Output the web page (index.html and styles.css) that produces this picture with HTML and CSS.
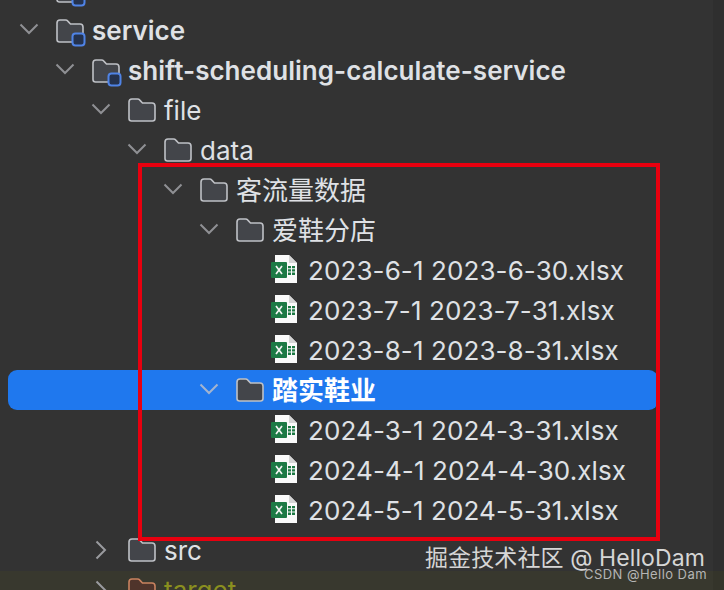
FILE: index.html
```html
<!DOCTYPE html>
<html lang="zh-CN">
<head>
<meta charset="utf-8">
<title>Project tree</title>
<link rel="stylesheet" href="styles.css">
</head>
<body>
<svg class="defs" width="0" height="0" aria-hidden="true">
  <symbol id="down" viewBox="0 0 20 12"><path d="M1.500 1.500 10 10l8.500-8.500" fill="none" stroke="currentColor" stroke-width="2"/></symbol>
  <symbol id="right" viewBox="0 0 12 20"><path d="M1.500 1.500 10 10l-8.500 8.500" fill="none" stroke="currentColor" stroke-width="2"/></symbol>
  <symbol id="folder" viewBox="0 0 28 24"><path d="M1 4a3 3 0 0 1 3-3h5.500c1 0 1.700.4 2.300 1.100L14.500 5H24a3 3 0 0 1 3 3v12.500a2.500 2.500 0 0 1-2.500 2.500h-21A2.500 2.500 0 0 1 1 20.500z" fill="#43454a" stroke="#bfc1c6" stroke-width="1.600"/></symbol>
  <symbol id="folder-target" viewBox="0 0 28 24"><path d="M1 4a3 3 0 0 1 3-3h5.500c1 0 1.700.4 2.300 1.100L14.500 5H24a3 3 0 0 1 3 3v12.500a2.500 2.500 0 0 1-2.500 2.500h-21A2.500 2.500 0 0 1 1 20.500z" fill="#4f342b" stroke="#c9825f" stroke-width="1.600"/></symbol>
  <symbol id="module" viewBox="0 0 30 28"><path d="M1 4a3 3 0 0 1 3-3h5.500c1 0 1.700.4 2.300 1.100L14.500 5H24a3 3 0 0 1 3 3v12.500a2.500 2.500 0 0 1-2.500 2.500h-21A2.500 2.500 0 0 1 1 20.500z" fill="#43454a" stroke="#bfc1c6" stroke-width="1.600"/><rect x="16.500" y="14.500" width="12" height="12" rx="3" fill="#25324d" stroke="#4f83e6" stroke-width="2"/></symbol>
  <symbol id="excel" viewBox="0 0 28 32"><path d="M4 0h14l8 8v20H4z" fill="#fafafa"/><path d="M18 0v8h8z" fill="#d5d5d5"/><rect x="0" y="7" width="16" height="16" rx="1" fill="#1d7a45"/><path d="M5 11l6 8M11 11l-6 8" stroke="#f4f4f4" stroke-width="1.700"/><path d="M17 11h3v2.300h-3zM21 11h3v2.300h-3zM17 14.300h3v2.300h-3zM21 14.300h3v2.300h-3zM17 17.600h3v2.300h-3zM21 17.600h3v2.300h-3z" fill="#1d7a45"/></symbol>
</svg>

<main class="tree">
  <div class="row d0 strong clipped"><svg class="chev"><use href="#down"/></svg><svg class="mod"><use href="#module"/></svg><span class="label">api-gateway</span></div>
  <div class="row d0 strong"><svg class="chev"><use href="#down"/></svg><svg class="mod"><use href="#module"/></svg><span class="label">service</span></div>
  <div class="row d1 strong"><svg class="chev"><use href="#down"/></svg><svg class="mod"><use href="#module"/></svg><span class="label">shift-scheduling-calculate-service</span></div>
  <div class="row d2"><svg class="chev"><use href="#down"/></svg><svg class="fold"><use href="#folder"/></svg><span class="label">file</span></div>
  <div class="row d3"><svg class="chev"><use href="#down"/></svg><svg class="fold"><use href="#folder"/></svg><span class="label">data</span></div>
  <div class="row d4"><svg class="chev"><use href="#down"/></svg><svg class="fold"><use href="#folder"/></svg><span class="label">客流量数据</span></div>
  <div class="row d5"><svg class="chev"><use href="#down"/></svg><svg class="fold"><use href="#folder"/></svg><span class="label">爱鞋分店</span></div>
  <div class="row file"><svg class="xls"><use href="#excel"/></svg><span class="label">2023-6-1 2023-6-30.xlsx</span></div>
  <div class="row file"><svg class="xls"><use href="#excel"/></svg><span class="label">2023-7-1 2023-7-31.xlsx</span></div>
  <div class="row file"><svg class="xls"><use href="#excel"/></svg><span class="label">2023-8-1 2023-8-31.xlsx</span></div>
  <div class="row d5 selected"><svg class="chev"><use href="#down"/></svg><svg class="fold"><use href="#folder"/></svg><span class="label">踏实鞋业</span></div>
  <div class="row file"><svg class="xls"><use href="#excel"/></svg><span class="label">2024-3-1 2024-3-31.xlsx</span></div>
  <div class="row file"><svg class="xls"><use href="#excel"/></svg><span class="label">2024-4-1 2024-4-30.xlsx</span></div>
  <div class="row file"><svg class="xls"><use href="#excel"/></svg><span class="label">2024-5-1 2024-5-31.xlsx</span></div>
  <div class="row d2"><svg class="chev-r"><use href="#right"/></svg><svg class="fold"><use href="#folder"/></svg><span class="label">src</span></div>
  <div class="row d2 excluded"><svg class="chev-r"><use href="#right"/></svg><svg class="fold"><use href="#folder-target"/></svg><span class="label">target</span></div>
</main>

<div class="scroll-strip"></div>
<div class="highlight"></div>
<div class="mark-juejin">掘金技术社区 @ HelloDam</div>
<div class="mark-csdn">CSDN @Hello Dam</div>
</body>
</html>
```

FILE: styles.css
```css
html, body {
  margin: 0;
  height: 590px;
  overflow: hidden;
  background: #333333;
}
body {
  position: relative;
  font-family: Inter, "Noto Sans CJK SC", sans-serif;
  color: #dfe1e5;
}
.defs { position: absolute; }
.tree {
  display: flex;
  flex-direction: column;
  margin-top: -29px;
}
.row {
  display: flex;
  align-items: center;
  flex: 0 0 40px;
  height: 40px;
  font-size: 26px;
  white-space: nowrap;
  box-sizing: border-box;
}
.label { line-height: 40px; }
.clipped .label { line-height: 27px; align-self: flex-start; }
.chev { width: 20px; height: 12px; margin: 0 17px 4px 0; color: #8f9094; flex: none; }
.chev-r { width: 12px; height: 20px; margin: 0 21px 2px 4px; color: #9a9b9f; flex: none; }
.fold { width: 28px; height: 24px; margin: 0 8px 2px 0; flex: none; }
.mod { width: 30px; height: 28px; margin: 4px 6px 0 0; flex: none; }
.xls { width: 28px; height: 32px; margin-right: 9px; flex: none; }
.d0 { padding-left: 19px; }
.d1 { padding-left: 55px; }
.d2 { padding-left: 91px; }
.d3 { padding-left: 127px; }
.d4 { padding-left: 163px; }
.d5 { padding-left: 199px; }
.file { padding-left: 271px; letter-spacing: 0.1px; }
.strong { font-weight: 600; letter-spacing: 0.03px; }
.selected {
  margin: -1px 0 1px 8px;
  width: 650px;
  padding: 2px 0 0 191px;
  background: #1f78ee;
  border-radius: 9px;
  color: #fff;
  font-weight: 600;
}
.selected .chev { color: #a3b4cf; }
.excluded { background: #38382e; color: #8a8f1f; }
.scroll-strip {
  position: absolute;
  top: 0;
  right: 0;
  width: 11px;
  height: 590px;
  background: rgba(0, 0, 0, 0.07);
}
.highlight {
  position: absolute;
  left: 138px;
  top: 163px;
  width: 522px;
  height: 378px;
  box-sizing: border-box;
  border: 4px solid #e8000f;
}
.mark-juejin {
  position: absolute;
  left: 425px;
  top: 545px;
  font-size: 23px;
  line-height: 26px;
  letter-spacing: 0.1px;
  color: #d6d6d6;
  white-space: nowrap;
}
.mark-csdn {
  position: absolute;
  left: 584px;
  top: 566px;
  font-size: 13px;
  line-height: 16px;
  letter-spacing: 0.45px;
  color: #b5b5b5;
  white-space: nowrap;
}
```
